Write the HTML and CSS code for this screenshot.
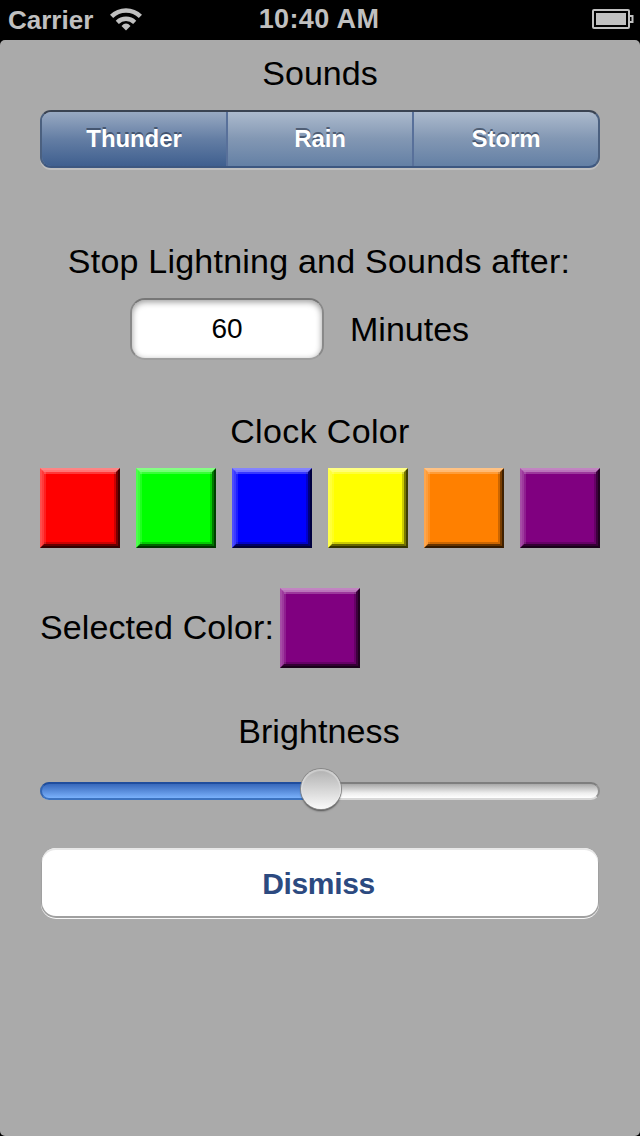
FILE: index.html
```html
<!DOCTYPE html>
<html lang="en">
<head>
<meta charset="utf-8">
<title>Settings</title>
<link rel="stylesheet" href="styles.css">
</head>
<body>
<header class="status">
  <div class="status-left">
    <span class="carrier">Carrier</span>
    <svg class="wifi" width="32" height="24" viewBox="0 0 32 24" fill="none" stroke="#c0c0c0" stroke-width="4.500">
      <path d="M1.600 9.400A20.500 20.500 0 0 1 30.400 9.400"/>
      <path d="M7.300 15.300A12.600 12.600 0 0 1 24.700 15.300"/>
      <path d="M16 23.500L11.500 18.900Q16 14.300 20.500 18.900Z" fill="#c0c0c0" stroke="none"/>
    </svg>
  </div>
  <span class="time">10:40 AM</span>
  <svg class="battery" width="42" height="20" viewBox="0 0 42 20">
    <rect x="1" y="1" width="36" height="18" rx="1" fill="none" stroke="#c0c0c0" stroke-width="2"/>
    <rect x="4" y="4" width="30" height="12" fill="#c0c0c0"/>
    <path d="M38 7H40.500V13H38" fill="none" stroke="#c0c0c0" stroke-width="2"/>
  </svg>
</header>
<main class="panel">
  <h2 class="label sounds-label">Sounds</h2>
  <div class="segments">
    <button class="segment selected">Thunder</button>
    <button class="segment">Rain</button>
    <button class="segment">Storm</button>
  </div>
  <h2 class="label stop-label">Stop Lightning and Sounds after:</h2>
  <div class="minutes-row">
    <input class="minutes" value="60" aria-label="Minutes">
    <span class="label">Minutes</span>
  </div>
  <h2 class="label clock-label">Clock Color</h2>
  <div class="swatches">
    <div class="swatch red"></div>
    <div class="swatch green"></div>
    <div class="swatch blue"></div>
    <div class="swatch yellow"></div>
    <div class="swatch orange"></div>
    <div class="swatch purple"></div>
  </div>
  <div class="selected-row">
    <span class="label selected-label">Selected Color:</span>
    <div class="swatch purple"></div>
  </div>
  <h2 class="label brightness-label">Brightness</h2>
  <div class="slider">
    <div class="slider-fill"></div>
    <div class="slider-knob"></div>
  </div>
  <button class="dismiss">Dismiss</button>
</main>
</body>
</html>
```

FILE: styles.css
```css
* { box-sizing: border-box; }
body {
  margin: 0;
  width: 640px;
  height: 1136px;
  overflow: hidden;
  background: #000;
  font-family: "Liberation Sans", Arial, sans-serif;
}
button { border: 0; padding: 0; background: none; font: inherit; }
.status {
  display: grid;
  grid-template-columns: 1fr auto 1fr;
  align-items: center;
  height: 40px;
  padding: 0 6px 2px 8px;
  color: #c0c0c0;
  font-size: 26px;
  font-weight: bold;
}
.status-left { display: flex; align-items: center; gap: 17px; }
.carrier { padding-top: 2px; }
.time { font-size: 27px; letter-spacing: .4px; margin-right: 4px; padding-top: 1px; }
.battery { justify-self: end; }
.panel {
  display: flex;
  flex-direction: column;
  height: 1096px;
  padding: 9px 40px 0;
  border-radius: 5px;
  background: #aaa;
}
.label {
  margin: 0;
  color: #000;
  font-size: 34px;
  font-weight: normal;
  line-height: 48px;
  text-align: center;
  white-space: nowrap;
}
.segments {
  display: flex;
  height: 58px;
  margin-top: 13px;
  border: 2px solid;
  border-color: #3a4352 #4b607f #3d5780 #4b607f;
  border-radius: 11px;
  background: linear-gradient(#acbacd, #8297b3 50%, #6480a5);
  box-shadow: 0 2px 0 #c0c0c0;
  overflow: hidden;
}
.segment {
  flex: 1;
  color: #fff;
  font-size: 24px;
  font-weight: bold;
  line-height: 54px;
  letter-spacing: -.1px;
  text-shadow: 0 -2px 0 rgba(35, 48, 70, .6);
}
.segment + .segment { border-left: 2px solid #58709a; }
.segment.selected { background: linear-gradient(#98a9c2, #647ea4 50%, #3f5f8f); }
.stop-label { margin-top: 69px; margin-left: -2px; letter-spacing: .22px; }
.minutes-row {
  display: flex;
  align-items: center;
  gap: 26px;
  height: 62px;
  margin: 13px 0 0 90px;
}
.minutes {
  width: 194px;
  height: 62px;
  padding: 0;
  border: 2px solid;
  border-color: #777 #898989 #9e9e9e;
  border-radius: 15px;
  background: #fff;
  box-shadow: inset 0 2px 6px rgba(0, 0, 0, .4);
  font: 28px "Liberation Sans", Arial, sans-serif;
  text-align: center;
}
.clock-label { margin-top: 47px; letter-spacing: .35px; }
.swatches { display: flex; gap: 16px; margin-top: 13px; }
.swatch {
  position: relative;
  width: 80px;
  height: 80px;
  border: 2px solid;
  border-color: rgba(255, 255, 255, .52) rgba(0, 0, 0, .75) rgba(0, 0, 0, .8) rgba(255, 255, 255, .3);
}
.swatch::before {
  content: "";
  position: absolute;
  inset: 0;
  border: 2px solid;
  border-color: rgba(255, 255, 255, .46) rgba(0, 0, 0, .52) rgba(0, 0, 0, .6) rgba(255, 255, 255, .23);
  box-shadow: inset 0 2px 0 rgba(255, 255, 255, .22), inset 2px 0 0 rgba(255, 255, 255, .12), inset -2px -2px 0 rgba(0, 0, 0, .2);
}
.red { background-color: #f00; }
.green { background-color: #0f0; }
.blue { background-color: #00f; }
.yellow { background-color: #ff0; }
.orange { background-color: #ff8000; }
.purple { background-color: #800080; }
.selected-row { display: flex; align-items: center; height: 80px; margin-top: 40px; }
.selected-label { width: 240px; margin-top: -2px; letter-spacing: .1px; text-align: left; }
.brightness-label { margin-top: 39px; margin-left: -2px; letter-spacing: .1px; }
.slider {
  position: relative;
  height: 18px;
  margin-top: 27px;
  border: 2px solid;
  border-color: #7e7e7e #929292 #d8d8d8;
  border-radius: 9px;
  background: linear-gradient(#a8a8a8, #eee 65%, #fff);
}
.slider-fill {
  position: absolute;
  left: -2px;
  top: -2px;
  width: 50%;
  height: 18px;
  border: 2px solid;
  border-color: #1f4d9d #3265b2 #3c73c0;
  border-right: 0;
  border-radius: 9px 0 0 9px;
  background: linear-gradient(#3768bb, #7ab1fb);
}
.slider-knob {
  position: absolute;
  left: 259px;
  top: -15px;
  width: 40px;
  height: 40px;
  border-radius: 50%;
  background: linear-gradient(#b0b0b0, #fafafa);
  box-shadow: 0 0 0 1px #888, 0 2px 2px rgba(0, 0, 0, .55), inset 0 1px 1px 1px rgba(255, 255, 255, .35);
}
.dismiss {
  height: 68px;
  margin: 48px 2px 0;
  border-radius: 14px;
  background: #fff;
  box-shadow: inset 0 2px 0 #e8e8e8, 0 1px 0 1px #a0a0a0, 0 2px 0 1px #f8f8f8;
  color: #2c4a80;
  font-size: 30px;
  font-weight: bold;
  line-height: 72px;
  letter-spacing: -.35px;
  text-indent: -3px;
}
```
